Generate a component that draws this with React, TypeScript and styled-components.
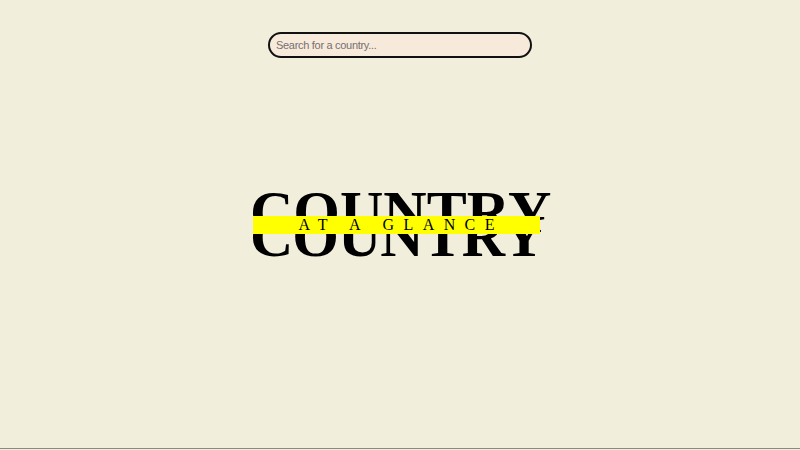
import styled, { createGlobalStyle } from "styled-components";

const GlobalStyle = createGlobalStyle`
  html, body {
    margin: 0;
    padding: 0;
    background: #f2eedc;
  }
  body {
    font-family: "Liberation Sans", Arial, sans-serif;
  }
`;

export default function App() {
  return (
    <>
      <GlobalStyle />
      <Page>
        <SearchBar type="text" placeholder="Search for a country..." />
        <Logo>
          <Word>COUNTRY</Word>
          <Word $bottom>COUNTRY</Word>
          <Band>
            <Tagline>AT A GLANCE</Tagline>
          </Band>
        </Logo>
      </Page>
    </>
  );
}

const Page = styled.main`
  height: 449px;
  border-bottom: 1px solid #8a8a80;
  display: flex;
  flex-direction: column;
  align-items: center;
  padding-top: 32px;
  box-sizing: border-box;
`;

const SearchBar = styled.input`
  width: 264px;
  height: 26px;
  box-sizing: border-box;
  border: 2px solid #111;
  border-radius: 13px;
  background: #f8eadb;
  padding: 0 6px;
  font-family: "Liberation Sans", Arial, sans-serif;
  font-size: 11px;
  letter-spacing: -0.3px;
  color: #333;
  outline: none;

  &::placeholder {
    color: #757070;
  }
`;

const Logo = styled.div`
  position: relative;
  margin-top: 124px;
  display: flex;
  flex-direction: column;
  align-items: flex-start;
  width: 300px;
`;

const Word = styled.div<{ $bottom?: boolean }>`
  font-family: "Liberation Serif", "Times New Roman", serif;
  font-weight: 700;
  font-size: 60px;
  line-height: 60px;
  color: #000;
  letter-spacing: ${(p) => (p.$bottom ? "-1px" : "0")};
  margin-top: ${(p) => (p.$bottom ? "-36px" : "0")};
`;

const Band = styled.div`
  position: absolute;
  left: 3px;
  top: 34px;
  width: 287px;
  height: 18px;
  background: #ffff00;
  display: flex;
  align-items: center;
  justify-content: center;
`;

const Tagline = styled.span`
  font-family: "Liberation Serif", "Times New Roman", serif;
  font-size: 16px;
  line-height: 18px;
  letter-spacing: 9.4px;
  padding-left: 9.4px;
  color: #000;
`;
